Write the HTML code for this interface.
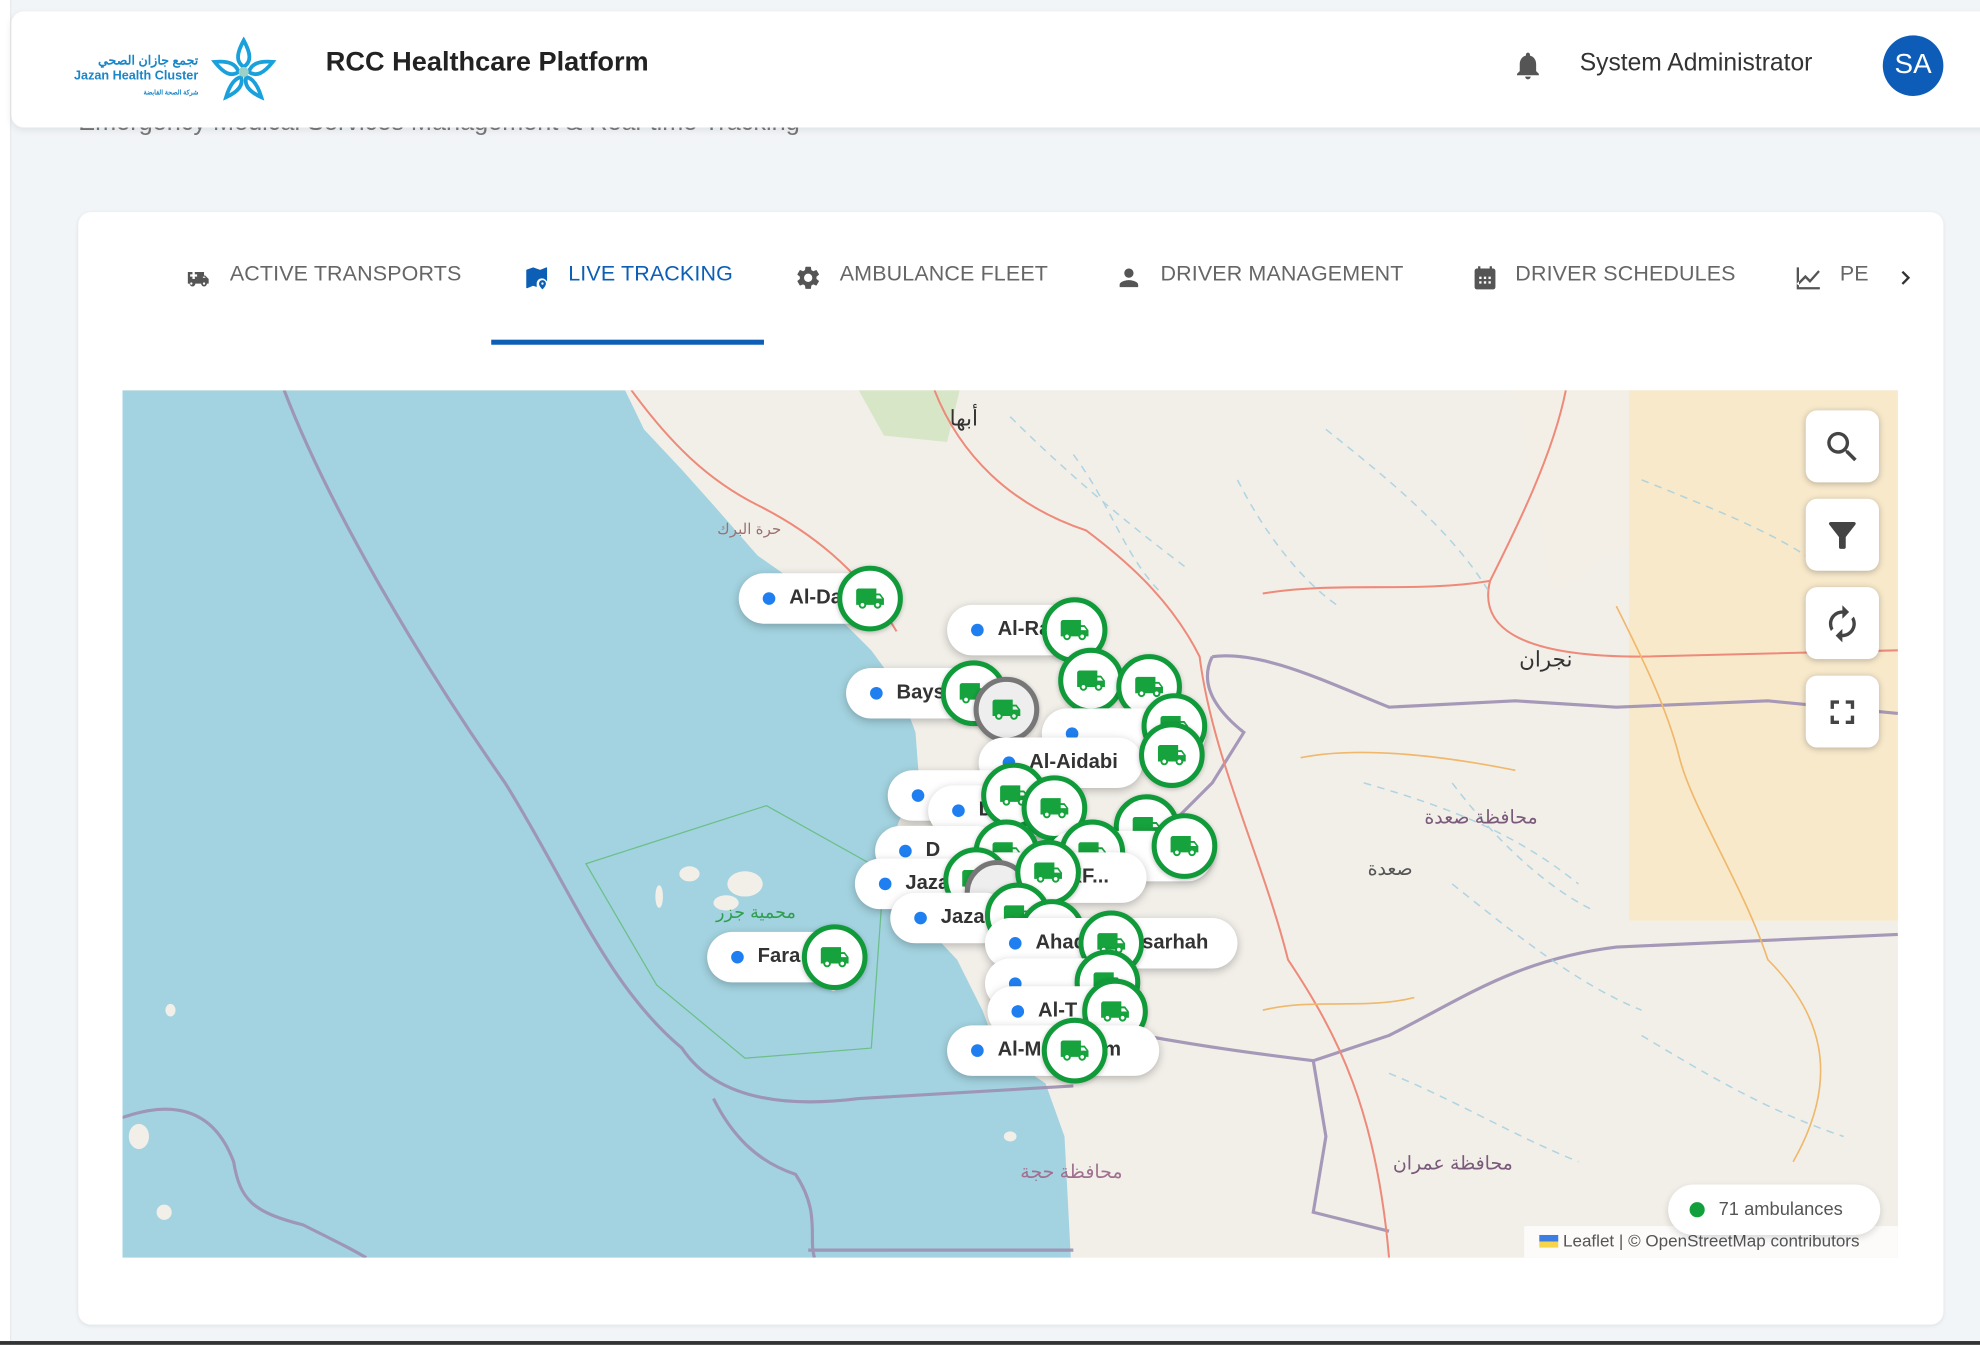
<!DOCTYPE html>
<html><head><meta charset="utf-8">
<style>
*{box-sizing:border-box;margin:0;padding:0}
html,body{width:1980px;height:1344px;overflow:hidden;background:#f2f5f8;font-family:"Liberation Sans","Noto Sans CJK SC",sans-serif}
#w{position:absolute;left:0;top:0;width:1568px;height:1065px;transform:scale(1.26276);transform-origin:0 0;background:#f2f5f8}
.abs{position:absolute}
.hdr{left:9px;top:9px;width:1570px;height:92px;background:#fff;border-radius:10px;box-shadow:0 2px 6px rgba(0,0,0,.08)}
.card{left:62px;top:168px;width:1477px;height:881px;background:#fff;border-radius:10px;box-shadow:0 1px 4px rgba(0,0,0,.08)}
.tab{position:absolute;top:207px;font-size:17px;color:#666;letter-spacing:.1px;white-space:nowrap}
.ti{position:absolute;top:209px;width:22px;height:22px;fill:#555}
#map{left:97px;top:309px;width:1406px;height:687px;overflow:hidden;background:#f2efe9}
.pill{position:absolute;height:40px;border-radius:20px;background:#fff;box-shadow:0 2px 7px rgba(0,0,0,.25);font-weight:bold;font-size:16px;color:#333;line-height:40px;padding-left:40px;white-space:nowrap;overflow:hidden}
.pill:before{content:"";position:absolute;left:19px;top:15px;width:10px;height:10px;border-radius:50%;background:#1f7ff0}
.c{position:absolute;width:52px;height:52px;border-radius:50%;border:4px solid #119a3a;background:#fff;box-shadow:0 1px 4px rgba(0,0,0,.25)}
.c svg{position:absolute;left:10px;top:10px;width:24px;height:24px;fill:#16a23c}
.g{border-color:#777;background:#eee}
.btn{position:absolute;left:1333px;width:58px;height:57px;background:#fff;border-radius:9px;box-shadow:0 1px 5px rgba(0,0,0,.25)}
.btn svg{position:absolute;left:13px;top:13px;width:32px;height:32px;fill:#444}
</style></head><body>
<svg width="0" height="0" style="position:absolute"><defs><symbol id="tr" viewBox="0 0 24 24"><path d="M20 8h-3V4H3c-1.1 0-2 .9-2 2v11h2c0 1.66 1.34 3 3 3s3-1.34 3-3h6c0 1.66 1.34 3 3 3s3-1.34 3-3h2v-5l-3-4zM6 18.5c-.83 0-1.5-.67-1.5-1.5s.67-1.5 1.5-1.5 1.5.67 1.5 1.5-.67 1.5-1.5 1.5zm13.5-9l1.96 2.5H17V9.5h2.5zm-1.5 9c-.83 0-1.5-.67-1.5-1.5s.67-1.5 1.5-1.5 1.5.67 1.5 1.5-.67 1.5-1.5 1.5z"/></symbol></defs></svg>
<div id="w">
<div class="abs" style="left:0;top:0;width:9px;height:1065px;background:#fff;border-right:1px solid #e6e8ea"></div>
<div class="abs" style="left:62px;top:86px;font-size:20px;color:#777;white-space:nowrap">Emergency Medical Services Management &amp; Real-time Tracking</div>
<div class="abs hdr">
 <div class="abs" style="left:40px;top:34px;font-size:10px;color:#1a86c8;font-weight:bold;line-height:12px;text-align:right;width:108px;white-space:nowrap">تجمع جازان الصحي<br>Jazan Health Cluster<br><span style="font-size:5px">شركة الصحة القابضة</span></div>
 <svg class="abs" style="left:158px;top:20px" width="52" height="52" viewBox="0 0 52 52"><g fill="none" stroke="#1aa0da" stroke-width="3"><path d="M26 3 C20 14 20 20 26 24 C32 20 32 14 26 3Z"/><path d="M49 20 C37 19 32 22 30 28 C36 32 42 29 49 20Z"/><path d="M3 20 C15 19 20 22 22 28 C16 32 10 29 3 20Z"/><path d="M12 48 C15 38 19 33 24 32 C26 39 21 44 12 48Z"/><path d="M40 48 C37 38 33 33 28 32 C26 39 31 44 40 48Z"/></g><circle cx="26" cy="28" r="4" fill="#9bd1c8"/></svg>
 <div class="abs" style="left:249px;top:28px;font-size:21.5px;font-weight:bold;color:#222;white-space:nowrap">RCC Healthcare Platform</div>
 <svg class="abs" style="left:1188px;top:28px" width="26" height="30" viewBox="0 0 24 24" fill="#555"><path d="M12 22c1.1 0 2-.9 2-2h-4c0 1.1.9 2 2 2zm6-6v-5c0-3.07-1.64-5.64-4.5-6.32V4c0-.83-.67-1.5-1.5-1.5s-1.5.67-1.5 1.5v.68C7.63 5.36 6 7.92 6 11v5l-2 2v1h16v-1l-2-2z"/></svg>
 <div class="abs" style="left:1242px;top:30px;font-size:19.5px;color:#333;white-space:nowrap">System Administrator</div>
 <div class="abs" style="left:1482px;top:19px;width:48px;height:48px;border-radius:50%;background:#0c5cb8;color:#fff;font-size:22px;line-height:46px;text-align:center">SA</div>
</div>
<div class="abs card"></div>
<svg class="ti" style="left:146px" viewBox="0 0 24 24"><path d="M18 10h-1V7H3v10h1.5a2.5 2.5 0 005 0h5a2.5 2.5 0 005 0H21v-4l-3-3zM6 18a1 1 0 110-2 1 1 0 010 2zm5-7H9v2H7v-2H5V9h2V7h2v2h2v2zm6 7a1 1 0 110-2 1 1 0 010 2zm-1-6V11h1.5l1.5 1.5V12h-3z"/></svg>
<div class="tab" style="left:182px">ACTIVE TRANSPORTS</div>
<svg class="ti" style="left:414px;fill:#0d5fb5" viewBox="0 0 24 24"><path d="M20.5 3l-.16.03L15 5.1 9 3 3.36 4.9c-.21.07-.36.25-.36.48V20.5c0 .28.22.5.5.5l.16-.03L9 18.9l3 1.05V17c0-2.5 2-4.5 4.5-4.5 1.6 0 3 .8 3.8 2.1H21V3.5c0-.28-.22-.5-.5-.5z"/><path d="M17 14a3 3 0 00-3 3c0 2.2 3 5 3 5s3-2.8 3-5a3 3 0 00-3-3zm0 4a1 1 0 110-2 1 1 0 010 2z"/></svg>
<div class="tab" style="left:450px;color:#0d5fb5">LIVE TRACKING</div>
<div class="abs" style="left:389px;top:269px;width:216px;height:4px;background:#0d5fb5"></div>
<svg class="ti" style="left:629px" viewBox="0 0 24 24"><path d="M19.14 12.94c.04-.3.06-.61.06-.94s-.02-.64-.07-.94l2.030-1.58a.5.5 0 00.12-.61l-1.92-3.32a.5.5 0 00-.59-.22l-2.39.96c-.5-.38-1.03-.7-1.62-.94l-.36-2.54a.48.48 0 00-.48-.41h-3.840c-.24 0-.43.17-.47.41l-.36 2.54c-.59.24-1.13.57-1.62.94l-2.39-.96a.48.48 0 00-.59.22L2.74 8.87a.47.47 0 00.12.61l2.03 1.58c-.05.3-.09.63-.09.94s.02.64.07.94l-2.03 1.58a.5.5 0 00-.12.61l1.92 3.32c.12.22.37.29.59.22l2.39-.96c.5.38 1.03.7 1.62.94l.36 2.54c.05.24.24.41.48.41h3.84c.24 0 .44-.17.47-.41l.36-2.54c.59-.24 1.13-.56 1.62-.94l2.39.96c.22.08.47 0 .59-.22l1.92-3.32a.46.46 0 00-.12-.61l-2.01-1.58zM12 15.6A3.6 3.6 0 1112 8.4a3.6 3.6 0 010 7.2z"/></svg>
<div class="tab" style="left:665px">AMBULANCE FLEET</div>
<svg class="ti" style="left:883px" viewBox="0 0 24 24"><path d="M12 12c2.2 0 4-1.8 4-4s-1.8-4-4-4-4 1.8-4 4 1.8 4 4 4zm0 2c-2.7 0-8 1.3-8 4v2h16v-2c0-2.7-5.3-4-8-4z"/></svg>
<div class="tab" style="left:919px">DRIVER MANAGEMENT</div>
<svg class="ti" style="left:1165px" viewBox="0 0 24 24"><path d="M19 4h-1V2h-2v2H8V2H6v2H5a2 2 0 00-2 2v14a2 2 0 002 2h14a2 2 0 002-2V6a2 2 0 00-2-2zM7 11h2v2H7zm4 0h2v2h-2zm4 0h2v2h-2zM7 15h2v2H7zm4 0h2v2h-2zm4 0h2v2h-2z"/></svg>
<div class="tab" style="left:1200px">DRIVER SCHEDULES</div>
<svg class="ti" style="left:1421px" viewBox="0 0 24 24"><path d="M3.5 18.49l6-6.01 4 4L22 6.92l-1.41-1.410-7.09 7.97-4-4L2 16.99z M2 3h2v17h18v2H2z"/></svg>
<div class="tab" style="left:1457px">PE</div>
<svg class="abs" style="left:1498px;top:209px" width="22" height="22" viewBox="0 0 24 24" fill="#333"><path d="M10 6L8.59 7.41 13.17 12l-4.58 4.59L10 18l6-6z"/></svg>

<div id="map" class="abs">
<svg class="abs" style="left:0;top:0" width="1406" height="687" viewBox="97 309 1406 687">
 <rect x="1290" y="309" width="213" height="420" fill="#f8e9cb"/>
 <path d="M1200 309 L1290 309 L1290 430 L1230 470 Z" fill="#f4efe6"/>
 <path d="M680 309 L760 309 L750 350 L700 345Z" fill="#d8e6c8"/>
 <path d="M97 309 L495 309 L510 340 L540 372 L565 400 L600 440 L640 468 L665 490 L690 515 L712 545 L725 580 L728 620 L712 650 L700 685 L725 725 L758 760 L778 800 L790 832 L828 858 L843 900 L848 996 L97 996Z" fill="#a3d3e0"/>
 <g fill="none" stroke="#9d8fb3" stroke-width="2.5" opacity=".9">
  <path d="M225 309 C260 400 330 520 400 620 C450 700 480 780 540 830 C560 860 600 880 680 870 L850 860"/>
  <path d="M97 885 C140 870 170 880 185 920 C190 950 200 960 240 970 C270 985 280 990 290 996"/>
  <path d="M565 870 C580 900 600 920 630 930 C650 960 640 980 645 996"/>
  <path d="M640 990 L850 990"/>
  <path d="M960 520 C1000 515 1050 540 1100 560 L1200 555 L1280 560 L1400 555 L1503 565"/>
  <path d="M960 520 C950 540 960 560 985 580 L960 620 L930 650"/>
  <path d="M905 820 C960 830 1000 835 1040 840 L1050 900 L1040 960 L1100 975"/>
  <path d="M1040 840 L1100 820 C1160 790 1200 760 1280 750 L1503 740"/>
 </g>
 <g fill="none" stroke="#ee8a7a" stroke-width="1.6">
  <path d="M500 309 C530 350 560 380 600 400 C640 420 680 450 710 500"/>
  <path d="M740 309 C760 360 800 400 860 420 C900 450 930 480 950 520 C960 600 1000 680 1020 760 C1060 820 1090 880 1100 996"/>
  <path d="M1240 309 C1230 360 1200 420 1180 460 C1170 500 1210 520 1300 520 L1503 515"/>
  <path d="M1000 470 C1060 460 1120 470 1180 460"/>
 </g>
 <g fill="none" stroke="#f0b86a" stroke-width="1.3">
  <path d="M1280 480 C1300 520 1320 560 1330 600 C1340 640 1380 700 1400 760 C1440 800 1460 850 1420 920"/>
  <path d="M1030 600 C1080 590 1150 600 1200 610"/>
  <path d="M1000 800 C1040 790 1080 800 1120 790"/>
 </g>
 <g fill="none" stroke="#9ecde0" stroke-width="1.2" stroke-dasharray="6 5" opacity=".8">
  <path d="M800 330 C850 380 900 420 940 450"/><path d="M1050 340 C1100 380 1150 420 1180 470"/>
  <path d="M1300 380 C1350 400 1400 420 1430 440"/><path d="M1080 620 C1150 640 1200 660 1250 700"/>
  <path d="M1100 850 C1150 870 1200 900 1250 920"/><path d="M1300 820 C1350 850 1400 880 1460 900"/>
  <path d="M980 380 C1000 420 1030 460 1060 480"/><path d="M1150 700 C1200 740 1250 780 1300 800"/>
  <path d="M850 360 C880 400 890 440 920 470"/><path d="M1150 620 C1180 660 1220 700 1260 720"/>
 </g>
 <path d="M464 684 L607 638 L700 690 L690 830 L590 838 L520 780 Z" fill="none" stroke="#6cbf8a" stroke-width="1"/>
 <g fill="#f2efe9"><ellipse cx="546" cy="692" rx="8" ry="6"/><ellipse cx="590" cy="700" rx="14" ry="10"/><ellipse cx="522" cy="710" rx="3" ry="9"/><ellipse cx="575" cy="715" rx="10" ry="6"/><ellipse cx="660" cy="780" rx="3" ry="5"/><ellipse cx="135" cy="800" rx="4" ry="5"/><ellipse cx="110" cy="900" rx="8" ry="10"/><ellipse cx="130" cy="960" rx="6" ry="6"/><ellipse cx="800" cy="900" rx="5" ry="4"/><ellipse cx="860" cy="880" rx="3" ry="4"/></g>
 <g font-family="Liberation Sans,Noto Sans CJK SC,sans-serif" fill="#7a5a7a" font-size="15">
  <text x="752" y="337" fill="#333" font-size="17">أبها</text>
  <text x="568" y="423" font-size="12" fill="#9a7070">حرة البرك</text>
  <text x="1203" y="528" fill="#333" font-size="17">نجران</text>
  <text x="1128" y="652">محافظة صعدة</text>
  <text x="1083" y="693" fill="#555">صعدة</text>
  <text x="1103" y="926">محافظة عمران</text>
  <text x="808" y="933" fill="#a07090">محافظة حجة</text>
  <text x="567" y="727" fill="#2f9e4f" font-size="14">محمية جزر</text>
 </g>
</svg>
<div class="pill" style="left:488px;top:145px;width:110px">Al-Da</div>
<div class="c" style="left:566px;top:139px"><svg><use href="#tr"/></svg></div>
<div class="pill" style="left:653px;top:170px;width:110px">Al-Ra</div>
<div class="c" style="left:728px;top:164px"><svg><use href="#tr"/></svg></div>
<div class="pill" style="left:573px;top:220px;width:120px">Bays</div>
<div class="c" style="left:741px;top:204px"><svg><use href="#tr"/></svg></div>
<div class="c" style="left:787px;top:209px"><svg><use href="#tr"/></svg></div>
<div class="c" style="left:648px;top:214px"><svg><use href="#tr"/></svg></div>
<div class="c g" style="left:674px;top:227px"><svg><use href="#tr"/></svg></div>
<div class="pill" style="left:728px;top:252px;width:130px"></div>
<div class="c" style="left:807px;top:240px"><svg><use href="#tr"/></svg></div>
<div class="pill" style="left:678px;top:275px;width:130px">Al-Aidabi</div>
<div class="c" style="left:805px;top:263px"><svg><use href="#tr"/></svg></div>
<div class="pill" style="left:606px;top:301px;width:100px"></div>
<div class="pill" style="left:638px;top:313px;width:115px">Dhan</div>
<div class="c" style="left:680px;top:295px"><svg><use href="#tr"/></svg></div>
<div class="c" style="left:712px;top:305px"><svg><use href="#tr"/></svg></div>
<div class="c" style="left:785px;top:320px"><svg><use href="#tr"/></svg></div>
<div class="pill" style="left:596px;top:345px;width:100px">D</div>
<div class="pill" style="left:733px;top:349px;width:130px">&nbsp;&nbsp;&nbsp;&nbsp;&nbsp;&nbsp;&nbsp;&nbsp;&nbsp;&nbsp;&nbsp;&nbsp;H)</div>
<div class="c" style="left:815px;top:335px"><svg><use href="#tr"/></svg></div>
<div class="c" style="left:674px;top:340px"><svg><use href="#tr"/></svg></div>
<div class="c" style="left:742px;top:340px"><svg><use href="#tr"/></svg></div>
<div class="pill" style="left:580px;top:371px;width:100px">Jaza</div>
<div class="pill" style="left:663px;top:366px;width:148px">&nbsp;&nbsp;&nbsp;&nbsp;&nbsp;&nbsp;&nbsp;&nbsp;&nbsp;(KF...</div>
<div class="c" style="left:650px;top:362px"><svg><use href="#tr"/></svg></div>
<div class="c g" style="left:667px;top:372px"></div>
<div class="c" style="left:707px;top:356px"><svg><use href="#tr"/></svg></div>
<div class="pill" style="left:608px;top:398px;width:95px">Jaza</div>
<div class="c" style="left:683px;top:390px"><svg><use href="#tr"/></svg></div>
<div class="c" style="left:710px;top:403px"><svg><use href="#tr"/></svg></div>
<div class="pill" style="left:683px;top:418px;width:200px">Ahad&nbsp;&nbsp;&nbsp;&nbsp;&nbsp;&nbsp;&nbsp;&nbsp;&nbsp;&nbsp;sarhah</div>
<div class="c" style="left:757px;top:412px"><svg><use href="#tr"/></svg></div>
<div class="pill" style="left:683px;top:450px;width:110px"></div>
<div class="c" style="left:754px;top:443px"><svg><use href="#tr"/></svg></div>
<div class="pill" style="left:685px;top:472px;width:118px">Al-T</div>
<div class="c" style="left:760px;top:466px"><svg><use href="#tr"/></svg></div>
<div class="pill" style="left:653px;top:503px;width:168px">Al-M&nbsp;&nbsp;&nbsp;&nbsp;&nbsp;&nbsp;&nbsp;&nbsp;&nbsp;am</div>
<div class="c" style="left:728px;top:497px"><svg><use href="#tr"/></svg></div>
<div class="pill" style="left:463px;top:429px;width:110px">Fara</div>
<div class="c" style="left:538px;top:423px"><svg><use href="#tr"/></svg></div>

<div class="btn" style="top:16px"><svg viewBox="0 0 24 24"><path d="M15.5 14h-.79l-.28-.27A6.47 6.47 0 0016 9.5 6.5 6.5 0 109.5 16c1.61 0 3.09-.59 4.23-1.57l.27.28v.79l5 4.99L20.49 19l-4.99-5zm-6 0C7.01 14 5 11.99 5 9.5S7.01 5 9.5 5 14 7.01 14 9.5 11.99 14 9.5 14z"/></svg></div>
<div class="btn" style="top:86px"><svg viewBox="0 0 24 24"><path d="M4.25 5.61C6.27 8.2 10 13 10 13v6c0 .55.45 1 1 1h2c.55 0 1-.45 1-1v-6s3.72-4.8 5.74-7.39A.998.998 0 0018.95 4H5.04c-.83 0-1.3.95-.79 1.61z"/></svg></div>
<div class="btn" style="top:156px"><svg viewBox="0 0 24 24"><path d="M12 6v3l4-4-4-4v3c-4.42 0-8 3.58-8 8 0 1.57.46 3.03 1.24 4.26L6.7 14.8A5.87 5.87 0 016 12c0-3.31 2.69-6 6-6zm6.76 1.74L17.3 9.2c.44.84.7 1.79.7 2.8 0 3.310-2.69 6-6 6v-3l-4 4 4 4v-3c4.42 0 8-3.58 8-8 0-1.57-.46-3.03-1.24-4.26z"/></svg></div>
<div class="btn" style="top:226px"><svg viewBox="0 0 24 24"><path d="M7 14H5v5h5v-2H7v-3zm-2-4h2V7h3V5H5v5zm12 7h-3v2h5v-5h-2v3zM14 5v2h3v3h2V5h-5z"/></svg></div>
<div class="abs" style="left:1110px;top:662px;width:296px;height:25px;background:rgba(255,255,255,.75)"></div>
<div class="abs" style="left:1122px;top:666px;font-size:13.5px;color:#555;white-space:nowrap"><span style="display:inline-block;width:15px;height:10px;background:linear-gradient(#3b7de0 50%,#f7d54a 50%);vertical-align:-1px"></span> Leaflet | © OpenStreetMap contributors</div>
<div class="abs" style="left:1224px;top:629px;width:168px;height:40px;border-radius:20px;background:#fff;box-shadow:0 2px 6px rgba(0,0,0,.15);font-size:14.5px;color:#555;line-height:40px;padding-left:40px">71 ambulances<span style="position:absolute;left:17px;top:14px;width:12px;height:12px;border-radius:50%;background:#12a03c"></span></div>
</div>
<div class="abs" style="left:0;top:1062px;width:1568px;height:3px;background:#333"></div>
</div>
</body></html>
